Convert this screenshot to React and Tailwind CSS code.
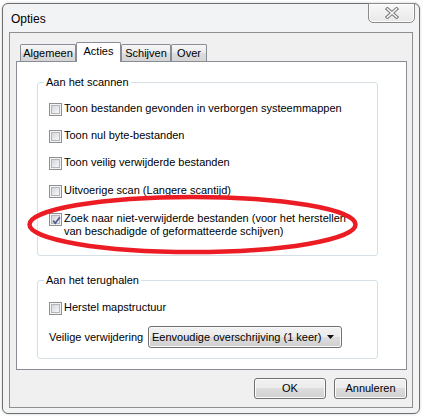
import React from "react";

const FONT = { fontFamily: '"Liberation Sans", Arial, sans-serif' };

function Checkbox({ checked }) {
  return (
    <div className="w-[13px] h-[13px] shrink-0 border border-[#8e8f8f] bg-[#f4f4f4] p-[1px] mt-[1px]">
      <div className="relative w-full h-full border border-[#b3b7bd] bg-gradient-to-br from-[#d3d6db] to-[#f7f7f7]">
        {checked && (
          <svg className="absolute left-[-1px] top-[-1px]" width="11" height="11" viewBox="0 0 11 11">
            <path d="M2.2 5.6 L4.3 8.2 L8.8 2.2" fill="none" stroke="#4a5a90" strokeWidth="1.7" />
          </svg>
        )}
      </div>
    </div>
  );
}

function Row({ checked, children, extra = "" }) {
  return (
    <div className={`flex items-start gap-[2px] ${extra}`}>
      <Checkbox checked={checked} />
      <div className="leading-[13px] text-black">{children}</div>
    </div>
  );
}

function Tab({ label, selected, w }) {
  if (selected) {
    return (
      <div
        className={`${w} h-[20px] mb-[-1px] relative z-10 bg-white border border-b-0 border-[#898c95] rounded-t-[2px] flex justify-center pt-[2px] leading-[13px]`}
      >
        {label}
      </div>
    );
  }
  return (
    <div
      className={`${w} h-[17px] border border-b-0 border-[#898c95] rounded-t-[2px] bg-[linear-gradient(to_bottom,#f7f7f7,#e9e9e9_50%,#dedede_50%,#d4d4d4)] flex justify-center pt-[2px] leading-[13px]`}
    >
      {label}
    </div>
  );
}

function Button({ children, w }) {
  return (
    <div
      className={`${w} h-[21px] border border-[#707070] rounded-[3px] bg-[linear-gradient(to_bottom,#f2f2f2,#ebebeb_49%,#dddddd_50%,#cfcfcf)] shadow-[inset_0_0_0_1px_#fbfbfb] flex items-center justify-center leading-[13px] text-black`}
    >
      {children}
    </div>
  );
}

export default function App() {
  return (
    <div className="relative w-[425px] h-[416px] bg-white overflow-hidden text-[11px] text-black" style={FONT}>
      <div className="pt-[3px] pl-[2px]">
        <div className="w-[418px] h-[411px] border border-[#6e6e6e] rounded-[6px] bg-[#f2f3f4] flex flex-col shadow-[0_0_3px_rgba(0,0,0,0.2)]">
          {/* Title bar */}
          <div className="h-[28px] flex justify-between items-start">
            <div className="pl-[8px] pt-[8px] text-[12px] leading-[14px] text-black">Opties</div>
            <div className="mt-[-1px] mr-[4px] w-[47px] h-[20px] border border-[#8a8a8a] rounded-b-[5px] bg-[linear-gradient(to_bottom,#f8f8f8,#e8e8e8)] shadow-[inset_0_0_0_1px_#fdfdfd] flex items-center justify-center">
              <svg width="14" height="12" viewBox="0 0 14 12">
                <path d="M2.5 2 L11.5 10 M11.5 2 L2.5 10" stroke="#7a7a7a" strokeWidth="3.6" strokeLinecap="square" />
                <path d="M2.5 2 L11.5 10 M11.5 2 L2.5 10" stroke="#f4f4f4" strokeWidth="1.6" strokeLinecap="square" />
              </svg>
            </div>
          </div>

          {/* Client area */}
          <div className="mx-[6px] h-[376px] border border-[#8e8e8e] bg-[#f0f0f0] flex flex-col pt-[9px] pl-[6px] pr-[5px]">
            {/* Tabs */}
            <div className="h-[19px] flex items-end pl-[4px]">
              <Tab label="Algemeen" w="w-[56px]" />
              <Tab label="Acties" w="w-[45px]" selected />
              <Tab label="Schijven" w="w-[50px]" />
              <Tab label="Over" w="w-[36px]" />
            </div>

            {/* Panel */}
            <div className="border border-[#898c95] bg-white pt-[13px] pl-[20px] pr-[28px] pb-[10px]">
              <fieldset className="min-w-0 border border-[#d5dfe5] rounded-[3px] p-0 m-0">
                <legend className="ml-[6px] px-[2px] leading-[14px] text-black">Aan het scannen</legend>
                <div className="pl-[11px] pt-[13px] pb-[17px] flex flex-col gap-[13px]">
                  <Row>Toon bestanden gevonden in verborgen systeemmappen</Row>
                  <Row>Toon nul byte-bestanden</Row>
                  <Row>Toon veilig verwijderde bestanden</Row>
                  <Row extra="mt-[1px]">Uitvoerige scan (Langere scantijd)</Row>
                  <Row checked extra="mt-[1px]">
                    Zoek naar niet-verwijderde bestanden (voor het herstellen
                    <br />
                    van beschadigde of geformatteerde schijven)
                  </Row>
                </div>
              </fieldset>

              <fieldset className="min-w-0 mt-[17px] border border-[#d5dfe5] rounded-[3px] p-0 m-0">
                <legend className="ml-[6px] px-[2px] leading-[14px] text-black">Aan het terughalen</legend>
                <div className="pl-[11px] pt-[14px] pb-[10px] flex flex-col">
                  <Row>Herstel mapstructuur</Row>
                  <div className="mt-[11px] flex items-center">
                    <div className="w-[99px] leading-[13px]">Veilige verwijdering</div>
                    <div className="w-[194px] h-[22px] border border-[#707070] rounded-[3px] bg-[linear-gradient(to_bottom,#f2f2f2,#ebebeb_49%,#dddddd_50%,#cfcfcf)] shadow-[inset_0_0_0_1px_#fbfbfb] flex items-center pl-[3px] pr-[7px]">
                      <span className="flex-1 leading-[13px]">Eenvoudige overschrijving (1 keer)</span>
                      <svg width="7" height="4" viewBox="0 0 7 4">
                        <path d="M0 0 L7 0 L3.5 4 Z" fill="#111" />
                      </svg>
                    </div>
                  </div>
                </div>
              </fieldset>
            </div>

            {/* Buttons */}
            <div className="mt-[8px] flex justify-end gap-[8px]">
              <Button w="w-[72px]">OK</Button>
              <Button w="w-[73px]">Annuleren</Button>
            </div>
          </div>
        </div>
      </div>

      {/* Red annotation ellipse */}
      <svg className="absolute left-0 top-0 pointer-events-none" width="425" height="416" viewBox="0 0 425 416">
        <ellipse cx="192.5" cy="224.5" rx="163" ry="27.5" fill="none" stroke="#ec1c24" strokeWidth="4.5" />
      </svg>
    </div>
  );
}
